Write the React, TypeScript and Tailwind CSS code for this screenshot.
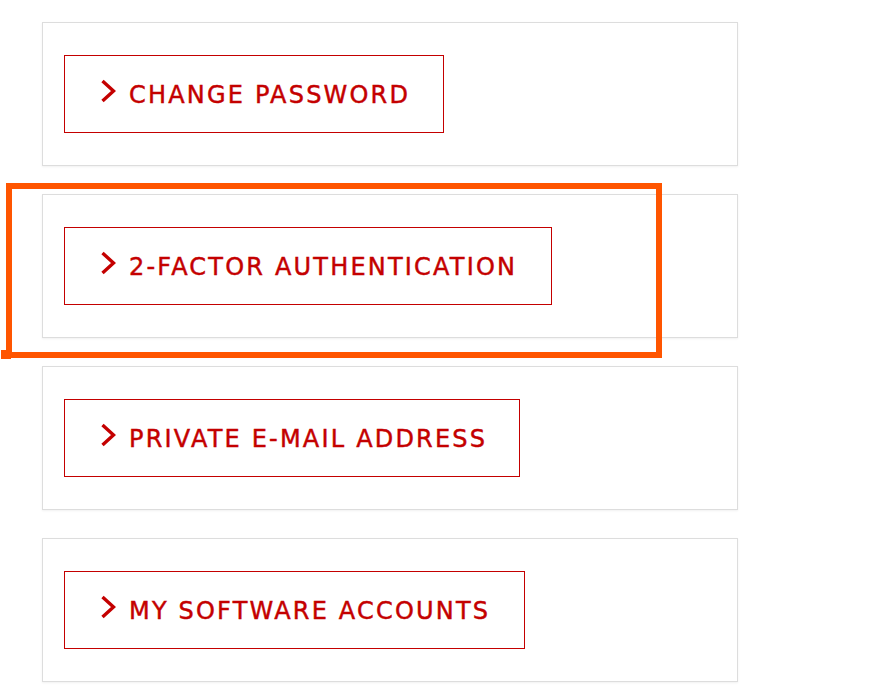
import React from "react";

const items = [
  { label: "CHANGE PASSWORD", w: "w-[380px]" },
  { label: "2-FACTOR AUTHENTICATION", w: "w-[488px]" },
  { label: "PRIVATE E-MAIL ADDRESS", w: "w-[456px]" },
  { label: "MY SOFTWARE ACCOUNTS", w: "w-[461px]" },
];

function Chevron() {
  return (
    <svg width="16" height="24" viewBox="0 0 16 24" className="shrink-0 -mt-[6px]">
      <polyline points="2.5,2 13.5,12 2.5,22" fill="none" stroke="#c40000" strokeWidth="3.4" />
    </svg>
  );
}

export default function App() {
  return (
    <div className="relative w-[878px] h-[690px] bg-white" style={{ fontFamily: '"DejaVu Sans", sans-serif' }}>
      <div className="flex flex-col gap-[28px] pl-[42px] pt-[22px]">
        {items.map((it) => (
          <div
            key={it.label}
            className="w-[696px] border border-[#dddddd] bg-white px-[21px] py-[32px] shadow-[0_1px_2px_rgba(0,0,0,0.06)]"
          >
            <div
              className={`${it.w} h-[78px] border border-[#c40000] flex items-center pl-[35px] gap-[13px] text-[#c40000] text-[24px] tracking-[2.2px] leading-none`}
            >
              <Chevron />
              <span className="whitespace-nowrap pt-[1px] [-webkit-text-stroke:0.45px_#c40000]">{it.label}</span>
            </div>
          </div>
        ))}
      </div>
      <div className="absolute left-[6px] top-[183px] w-[656px] h-[175px] border-[6px] border-[#ff5500]" />
      <div className="absolute left-[1px] top-[350px] w-[10px] h-[9px] bg-[#ff5500]" />
    </div>
  );
}
